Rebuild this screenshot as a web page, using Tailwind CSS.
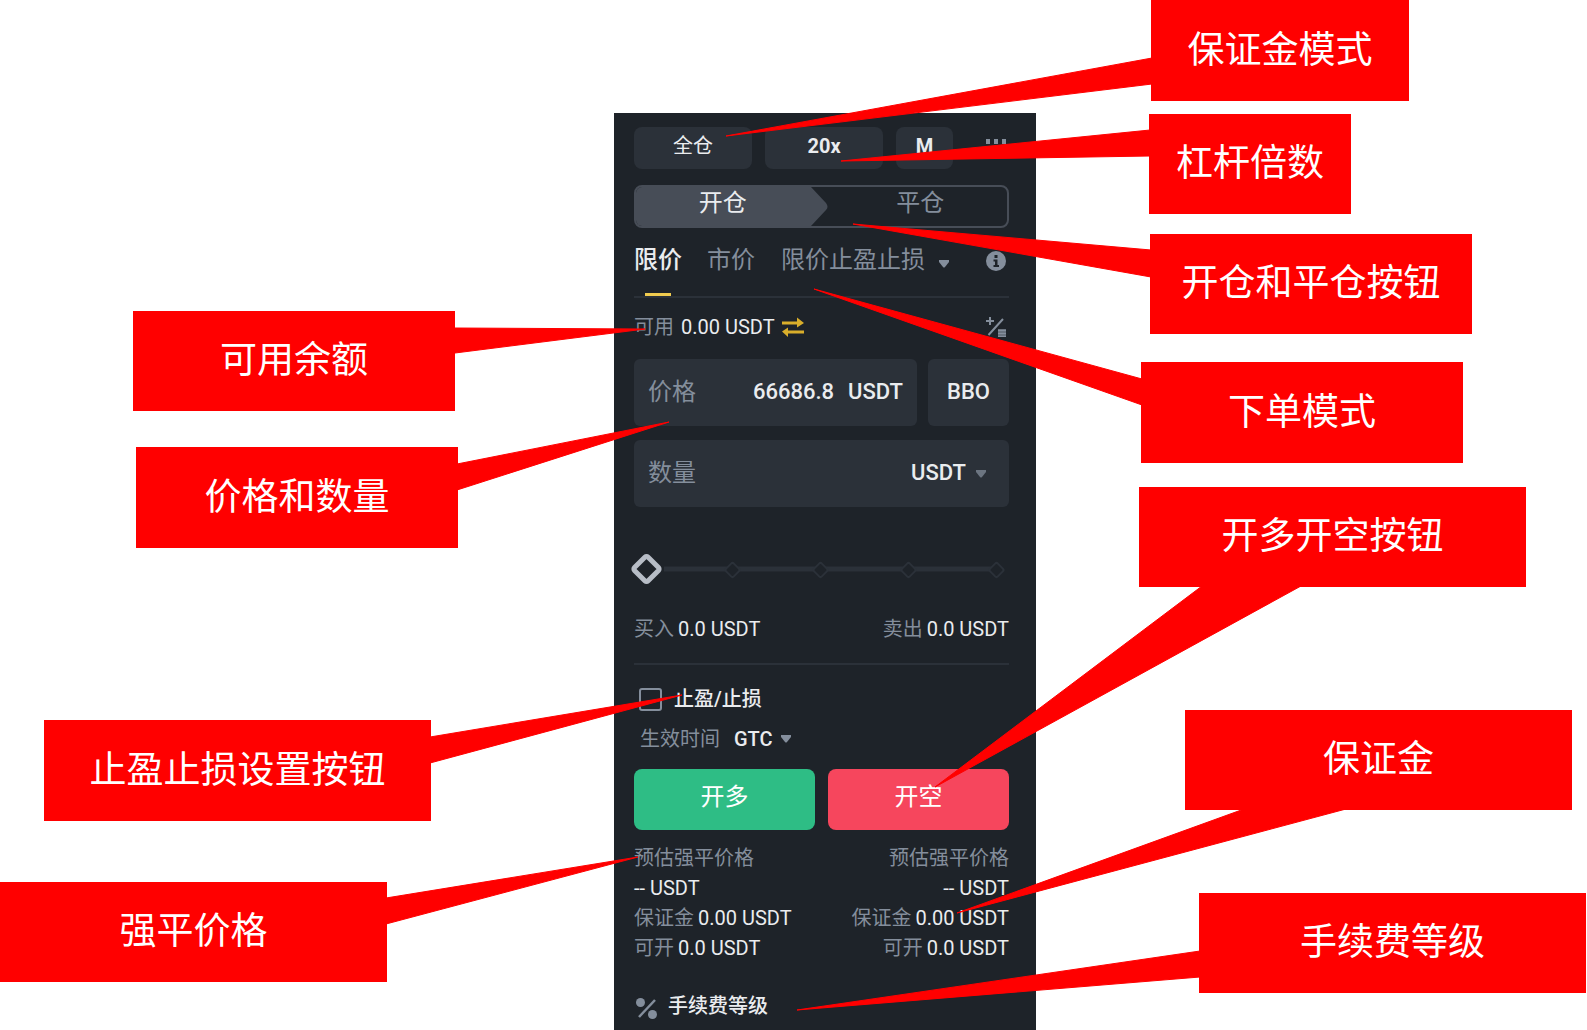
<!DOCTYPE html>
<html lang="zh-CN">
<head>
<meta charset="utf-8">
<meta name="viewport" content="width=device-width, initial-scale=1">
<title>合约下单面板说明</title>
<script src="https://cdn.jsdelivr.net/npm/@tailwindcss/browser@4"></script>
</head>
<body class="bg-white font-['Roboto','Noto_Sans_CJK_SC',sans-serif]">
<main class="flex min-h-screen justify-center overflow-hidden pl-[63px] pt-[113px]">
  <div class="relative w-[422px] shrink-0 bg-[#1e2329]">

    <!-- Order form -->
    <form class="flex flex-col pl-5 pr-[27px] pt-[14px] text-xl leading-[30px] text-[#eaecef]">
      <div class="flex h-[42px] gap-[13px]">
        <button type="button" class="w-[118px] rounded-lg bg-[#2b3139] pb-1">全仓</button>
        <button type="button" class="w-[118px] rounded-lg bg-[#2b3139] pb-1 font-bold">20x</button>
        <button type="button" class="w-[57px] rounded-lg bg-[#2b3139] pb-1 font-bold">M</button>
        <button type="button" aria-label="更多" class="ml-auto pr-[3px] pb-[14px]">
          <svg class="h-[6px] w-5" viewBox="0 0 20 6" fill="#848e9c"><rect y="1" width="4" height="5"/><rect x="8" y="1" width="4" height="5"/><rect x="16" y="1" width="4" height="5"/></svg>
        </button>
      </div>

      <div class="relative mt-4 grid h-[43px] grid-cols-2 overflow-hidden rounded-lg border-2 border-[#474d57] text-2xl">
        <svg class="absolute inset-y-0 left-0 h-full w-[194px]" viewBox="0 0 194 39" preserveAspectRatio="none" fill="#474d57"><path d="M0 0H175L190 16Q193 20 190 23L175 39H0Z"/></svg>
        <button type="button" class="relative pb-[10px] pr-3">开仓</button>
        <button type="button" class="relative pb-[10px] pl-3 text-[#848e9c]">平仓</button>
      </div>

      <nav class="flex h-[70px] items-start border-b-2 border-[#2b3139] text-2xl text-[#848e9c]">
        <button type="button" class="relative h-[68px] pb-1 font-medium text-[#eaecef]">限价<span class="absolute bottom-0 left-[11px] h-[3px] w-[26px] bg-[#f0cb4f]"></span></button>
        <button type="button" class="ml-[25px] h-[68px] pb-1">市价</button>
        <button type="button" class="ml-[26px] flex h-[68px] items-center gap-[14px] pb-1">限价止盈止损
          <svg class="mt-2 h-[8px] w-[10px]" viewBox="0 0 10 8" fill="#848e9c"><path d="M0 0H10V2L6 7Q5 8 4 7L0 2Z"/></svg></button>
        <button type="button" aria-label="说明" class="ml-auto h-[68px] pr-[3px] pb-[2px]">
          <svg class="h-5 w-5" viewBox="0 0 20 20"><circle cx="10" cy="10" r="10" fill="#848e9c"/><path d="M8.500 4h3v3h-3zM7.500 8.500h4v5.500h1.500v2h-5.500v-2h1.500v-3.500h-1.500z" fill="#1e2329"/></svg>
        </button>
      </nav>

      <div class="mt-[13px] flex h-8 items-center">
        <span class="text-[#848e9c]">可用</span>
        <span class="ml-[7px]">0.00 USDT</span>
        <button type="button" aria-label="划转" class="ml-[7px]">
          <svg class="h-5 w-[22px]" viewBox="0 0 22 20" fill="#d9ae2b"><path d="M0 4.500H15V0.500L22 6 15 10.500V7.500H0ZM22 16.500H6V20L0 14.500 6 10.500V13.500H22Z"/></svg>
        </button>
        <button type="button" aria-label="计算器" class="ml-auto pr-[3px]">
          <svg class="h-5 w-5" viewBox="0 0 20 20" fill="none" stroke="#848e9c" stroke-width="2"><path d="M0 4h8M4 0v8M2.500 18L17 2" /><path d="M12 13.500h8M12 16.500h8M12 19.500h8" stroke-width="2.500"/></svg>
        </button>
      </div>

      <div class="mt-4 flex h-[67px] gap-[11px] text-[22px]">
        <div class="flex flex-1 items-center rounded-md bg-[#2b3139] pl-[14px] pr-[14px] pb-[2px]">
          <label for="price" class="shrink-0 text-2xl text-[#848e9c]">价格</label>
          <input id="price" type="text" value="66686.8" class="w-0 min-w-0 flex-1 bg-transparent text-right font-medium outline-none">
          <span class="ml-[14px] font-medium">USDT</span>
        </div>
        <button type="button" class="w-[81px] rounded-md bg-[#2b3139] pb-[2px] font-medium">BBO</button>
      </div>

      <div class="mt-[14px] flex h-[67px] items-center rounded-md bg-[#2b3139] pb-[2px] pl-[14px] pr-[23px] text-[22px]">
        <label for="amount" class="shrink-0 text-2xl text-[#848e9c]">数量</label>
        <input id="amount" type="text" class="w-0 min-w-0 flex-1 bg-transparent text-right outline-none">
        <select aria-label="数量单位" class="appearance-none bg-transparent font-medium outline-none"><option>USDT</option></select>
        <svg class="ml-[10px] mt-[2px] h-[8px] w-[10px]" viewBox="0 0 10 8" fill="#6c7581"><path d="M0 0H10V2L6 7Q5 8 4 7L0 2Z"/></svg>
      </div>

      <div class="relative mt-[46px] h-8">
        <svg class="absolute -left-1 top-0 h-8 w-[376px]" viewBox="0 0 376 32">
          <path d="M34 16H366" stroke="#2b3139" stroke-width="5"/>
          <g fill="#1e2329" stroke="#2b3139" stroke-width="2">
            <rect x="-5.500" y="-5.500" width="11" height="11" rx="2" transform="translate(102.500 17) rotate(45)"/>
            <rect x="-5.500" y="-5.500" width="11" height="11" rx="2" transform="translate(190.500 17) rotate(45)"/>
            <rect x="-5.500" y="-5.500" width="11" height="11" rx="2" transform="translate(278.500 17) rotate(45)"/>
            <rect x="-5.500" y="-5.500" width="11" height="11" rx="2" transform="translate(366.500 17) rotate(45)"/>
          </g>
          <rect x="-9.500" y="-9.500" width="19" height="19" rx="2" transform="translate(16.500 16) rotate(45)" fill="#1e2329" stroke="#b7bdc6" stroke-width="5"/>
        </svg>
        <input type="range" min="0" max="100" value="0" aria-label="仓位比例" class="relative h-8 w-full opacity-0">
      </div>

      <div class="mt-[29px] flex h-[30px] justify-between">
        <div class="flex gap-[4px]"><span class="text-[#848e9c]">买入</span><span>0.0 USDT</span></div>
        <div class="flex gap-[4px]"><span class="text-[#848e9c]">卖出</span><span>0.0 USDT</span></div>
      </div>

      <hr class="mt-[19px] border-t-2 border-[#2b3139]">

      <div class="mt-[19px] flex h-[30px] items-center pl-[5px]">
        <input id="tpsl" type="checkbox" class="size-[23px] appearance-none rounded-[3px] border-2 border-[#848e9c]">
        <label for="tpsl" class="ml-[12px] font-medium">止盈/止损</label>
      </div>
      <div class="mt-[10px] flex h-[30px] items-center pl-[6px]">
        <label for="tif" class="text-[#848e9c]">生效时间</label>
        <select id="tif" class="ml-[14px] appearance-none bg-transparent font-medium outline-none"><option>GTC</option></select>
        <svg class="ml-[8px] h-[8px] w-[10px]" viewBox="0 0 10 8" fill="#848e9c"><path d="M0 0H10V2L6 7Q5 8 4 7L0 2Z"/></svg>
      </div>

      <div class="mt-[15px] grid h-[61px] grid-cols-2 gap-[13px] text-2xl text-white">
        <button type="button" class="rounded-lg bg-[#2ebd85] pb-[6px]">开多</button>
        <button type="button" class="rounded-lg bg-[#f6465d] pb-[6px]">开空</button>
      </div>

      <div class="mt-[13px] flex justify-between">
        <div class="flex flex-col items-start">
          <span class="text-[#848e9c]">预估强平价格</span>
          <span>-- USDT</span>
          <div class="flex gap-[4px]"><span class="text-[#848e9c]">保证金</span><span>0.00 USDT</span></div>
          <div class="flex gap-[4px]"><span class="text-[#848e9c]">可开</span><span>0.0 USDT</span></div>
        </div>
        <div class="flex flex-col items-end">
          <span class="text-[#848e9c]">预估强平价格</span>
          <span>-- USDT</span>
          <div class="flex gap-[4px]"><span class="text-[#848e9c]">保证金</span><span>0.00 USDT</span></div>
          <div class="flex gap-[4px]"><span class="text-[#848e9c]">可开</span><span>0.0 USDT</span></div>
        </div>
      </div>

      <a href="#" class="mt-[28px] flex h-[30px] items-center pl-[2px] font-medium">
        <svg class="mt-1 h-[21px] w-[21px]" viewBox="0 0 21 21"><path d="M3 19L19 2" stroke="#848e9c" stroke-width="2.500"/><circle cx="4.500" cy="4.500" r="4.500" fill="#848e9c"/><circle cx="16.500" cy="16.500" r="4.500" fill="#848e9c"/></svg>
        <span class="ml-[11px]">手续费等级</span>
      </a>
    </form>

    <!-- Pointers from each note to the control it explains -->
    <svg class="pointer-events-none absolute left-0 top-0 h-[917px] w-[422px] overflow-visible" viewBox="0 0 422 917" fill="#ff0000" stroke="#ff0000" stroke-width="1" stroke-linejoin="bevel">
      <path d="M112 23L538 -55V-29Z"/>
      <path d="M227 48L536 17V43Z"/>
      <path d="M239 111L537 137V164Z"/>
      <path d="M200 176L528 266V292Z"/>
      <path d="M321 674L588 473H687Z"/>
      <path d="M343 800L630 696H732Z"/>
      <path d="M183 897L586 838V864Z"/>
      <path d="M31 216L-159 215V240Z"/>
      <path d="M55 309L-157 351V377Z"/>
      <path d="M68 582L-184 624V650Z"/>
      <path d="M24 744L-228 785V811Z"/>
    </svg>

    <!-- Notes -->
    <div class="text-[37px] leading-[54px] text-white">
      <div class="absolute left-[537px] -top-[113px] flex h-[101px] w-[258px] items-center justify-center bg-[#ff0000]">保证金模式</div>
      <div class="absolute left-[535px] top-px flex h-[100px] w-[202px] items-center justify-center bg-[#ff0000]">杠杆倍数</div>
      <div class="absolute left-[536px] top-[121px] flex h-[100px] w-[322px] items-center justify-center bg-[#ff0000]">开仓和平仓按钮</div>
      <div class="absolute left-[527px] top-[249px] flex h-[101px] w-[322px] items-center justify-center bg-[#ff0000]">下单模式</div>
      <div class="absolute left-[525px] top-[374px] flex h-[100px] w-[387px] items-center justify-center bg-[#ff0000]">开多开空按钮</div>
      <div class="absolute left-[571px] top-[597px] flex h-[100px] w-[387px] items-center justify-center bg-[#ff0000]">保证金</div>
      <div class="absolute left-[585px] top-[780px] flex h-[100px] w-[387px] items-center justify-center bg-[#ff0000]">手续费等级</div>
      <div class="absolute -left-[481px] top-[198px] flex h-[100px] w-[322px] items-center justify-center bg-[#ff0000]">可用余额</div>
      <div class="absolute -left-[478px] top-[334px] flex h-[101px] w-[322px] items-center justify-center bg-[#ff0000]">价格和数量</div>
      <div class="absolute -left-[570px] top-[607px] flex h-[101px] w-[387px] items-center justify-center bg-[#ff0000]">止盈止损设置按钮</div>
      <div class="absolute -left-[614px] top-[769px] flex h-[100px] w-[387px] items-center justify-center bg-[#ff0000]">强平价格</div>
    </div>
  </div>
</main>
</body>
</html>
